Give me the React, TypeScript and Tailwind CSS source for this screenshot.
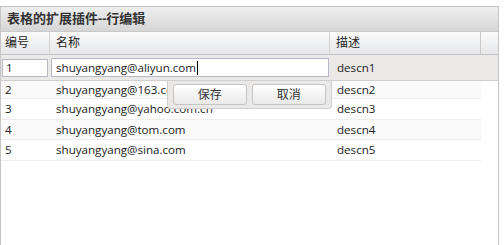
const rows = [
  { id: '2', name: 'shuyangyang@163.com', desc: 'descn2', alt: true, h: 'h-[18px]' },
  { id: '3', name: 'shuyangyang@yahoo.com.cn', desc: 'descn3', alt: false, h: 'h-[21px]' },
  { id: '4', name: 'shuyangyang@tom.com', desc: 'descn4', alt: true, h: 'h-[20px]' },
  { id: '5', name: 'shuyangyang@sina.com', desc: 'descn5', alt: false, h: 'h-[21px]' },
];

export default function App() {
  return (
    <div className="h-[245px] w-[504px] overflow-hidden bg-white pt-[6px] text-[11.6px] text-[#222]" style={{ fontFamily: '"Open Sans", "Noto Sans CJK SC", sans-serif' }}>
      <div className="h-[260px] w-[499px] border border-[#c5c5c5] bg-white">
        <div className="flex h-[25px] items-center border-b border-[#c9c9c9] bg-gradient-to-b from-[#eeeeee] to-[#d6d6d6] pl-[6px] text-[13px] font-bold text-[#333]">
          表格的扩展插件--行编辑
        </div>

        <div className="flex h-[23px] border-b border-[#c5c5c5] bg-gradient-to-b from-[#fbfbfb] to-[#e6e7e9] text-[12px]">
          <div className="flex w-[49px] items-center border-r border-[#d3d3d3] pl-[4px]">编号</div>
          <div className="flex w-[280px] items-center border-r border-[#d3d3d3] pl-[6px]">名称</div>
          <div className="flex w-[151px] items-center border-r border-[#c8c8c8] pl-[6px]">描述</div>
          <div className="flex-1" />
        </div>

        <div className="relative">
          <div className="flex h-[26px] items-center border-b border-[#cfcfcf] bg-[#ebe8e8]">
            <div className="flex w-[49px] items-center pl-[1px]">
              <div className="flex h-[18px] w-[46px] items-center border border-[#b5b8c8] bg-white pl-[3px]">1</div>
            </div>
            <div className="flex w-[280px] items-center pl-[1px]">
              <div className="flex h-[19px] w-[278px] items-center border border-[#b5b8c8] bg-white pl-[4px]">
                shuyangyang@aliyun.com
                <span className="ml-[1px] inline-block h-[14px] w-px bg-black" />
              </div>
            </div>
            <div className="pl-[7px]">descn1</div>
          </div>

          {rows.map((r) => (
            <div key={r.id} className={`flex w-[480px] items-center border-b border-[#ededed] ${r.h} ${r.alt ? 'bg-[#fafafa]' : 'bg-white'}`}>
              <div className="w-[49px] pl-[4px]">{r.id}</div>
              <div className="w-[280px] pl-[6px]">{r.name}</div>
              <div className="pl-[7px]">{r.desc}</div>
            </div>
          ))}

          <div className="absolute left-[166px] top-[26px] flex h-[28px] w-[165px] items-start gap-[5px] rounded-b-[4px] border border-t-0 border-[#cfcfcf] bg-[#ebe8e8] px-[5px] pt-[3px]">
            <button type="button" className="flex h-[21px] w-[74px] items-center justify-center rounded-[3px] border border-[#c4c4c4] bg-gradient-to-b from-[#ffffff] to-[#e9e9e9] text-[12px] text-[#333]">
              保存
            </button>
            <button type="button" className="flex h-[21px] w-[75px] items-center justify-center rounded-[3px] border border-[#c4c4c4] bg-gradient-to-b from-[#ffffff] to-[#e9e9e9] text-[12px] text-[#333]">
              取消
            </button>
          </div>
        </div>
      </div>
    </div>
  );
}
